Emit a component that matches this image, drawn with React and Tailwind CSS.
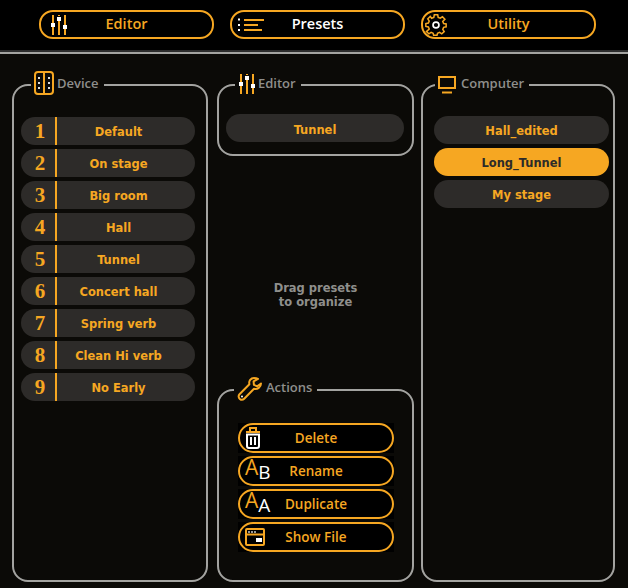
import React from 'react';

const device = ['Default', 'On stage', 'Big room', 'Hall', 'Tunnel', 'Concert hall', 'Spring verb', 'Clean Hi verb', 'No Early'];

function SlidersIcon() {
  return (
    <svg width="18" height="22" viewBox="0 0 18 22" fill="none">
      <path d="M3 1v8M3 13v8M9 1v1M9 6v15M15 1v10M15 15v6" stroke="#f6a722" strokeWidth="2" />
      <rect x="1" y="9" width="4" height="4" fill="#fff" />
      <rect x="7" y="3" width="4" height="4" fill="#fff" />
      <rect x="13" y="11" width="4" height="4" fill="#fff" />
    </svg>
  );
}

function ListIcon() {
  return (
    <svg width="26" height="14" viewBox="0 0 26 14" fill="none">
      <path d="M6 2h20M6 7h14M6 12h18" stroke="#f6a722" strokeWidth="2" />
      <path d="M0 1.500h2M0 7h2M0 12h2" stroke="#fff" strokeWidth="2" />
    </svg>
  );
}

function GearIcon() {
  return (
    <svg width="22" height="24" viewBox="0 0 26 26" fill="none">
      <path
        d="M11 2h4l.6 3 2.400 1 2.600-1.700 2.900 2.900L21 9.800l1 2.400 3 .6v3.400l-3 .6-1 2.400 1.700 2.600-2.900 2.600-2.600-1.700-2.400 1-.6 2.300h-4l-.6-2.300-2.400-1-2.600 1.700-2.900-2.600L5 18.700l-1-2.400-3-.6v-3.400l3-.6 1-2.400-1.700-2.600 2.900-2.900L7.800 6l2.600-1z"
        stroke="#f6a722"
        strokeWidth="1.800"
        transform="translate(0 -1)"
      />
      <circle cx="13" cy="13" r="3.500" stroke="#fff" strokeWidth="2" />
    </svg>
  );
}

function DeviceIcon() {
  return (
    <svg className="-mt-[2px]" width="20" height="24" viewBox="0 0 20 24" fill="none">
      <rect x="1" y="1" width="18" height="22" rx="3" stroke="#f6a722" strokeWidth="2" />
      <path d="M10 2v20" stroke="#f6a722" strokeWidth="2" />
      <path d="M5 6v2M5 11v2M5 16v2M15 6v2M15 11v2M15 16v2" stroke="#ddd" strokeWidth="2" />
    </svg>
  );
}

function MonitorIcon() {
  return (
    <svg className="mt-[2px]" width="18" height="18" viewBox="0 0 18 18" fill="none">
      <rect x="1" y="1" width="16" height="11" stroke="#f6a722" strokeWidth="2" />
      <path d="M4 16.500h10" stroke="#f6a722" strokeWidth="2" />
    </svg>
  );
}

function WrenchIcon() {
  return (
    <svg className="mt-[2px]" width="26" height="26" viewBox="0 0 26 26" fill="none">
      <path
        d="M17 2c-3.200 0-5.500 3-4.600 6.200L2.500 18.200c-1.500 1.600-.8 3.800.3 4.700 1.200 1 3.100 1.100 4.400-.2l9.800-10c3.400 1 7-1.500 7-5.200l-3.800 2.800-3.300-1.500-.3-3.500L21 2.800C19.800 2.200 18.400 2 17 2z"
        stroke="#f6a722"
        strokeWidth="2"
        strokeLinejoin="round"
      />
      <circle cx="5" cy="20.500" r="1" fill="#fff" />
    </svg>
  );
}

function TrashIcon() {
  return (
    <svg width="16" height="22" viewBox="0 0 16 22" fill="none">
      <path d="M1 5h14M5 4V1h6v3" stroke="#f6a722" strokeWidth="2" />
      <path d="M2 7.500h12V19a2 2 0 0 1-2 2H4a2 2 0 0 1-2-2z" stroke="#fff" strokeWidth="2" />
      <path d="M6 10v8M10 10v8" stroke="#fff" strokeWidth="2" />
    </svg>
  );
}

function WindowIcon() {
  return (
    <svg width="20" height="18" viewBox="0 0 20 18" fill="none">
      <rect x="1" y="1" width="18" height="16" rx="1" stroke="#f6a722" strokeWidth="2" />
      <path d="M1 6.500h18" stroke="#f6a722" strokeWidth="2" />
      <path d="M3 4h2M6 4h2M9 4h2" stroke="#ccc" strokeWidth="1.600" />
      <rect x="11" y="10" width="6" height="4" fill="#fff" />
    </svg>
  );
}

function LetterPair({ second }) {
  return (
    <span className="flex items-start leading-none font-['Open_Sans',sans-serif] font-normal h-[24px] w-[26px]">
      <span className="text-[21px] text-[#f6a722] -mt-[2px]">A</span>
      <span className="text-[19px] text-white mt-[4px]">{second}</span>
    </span>
  );
}

function TopButton({ icon, iconLeft, label, active }) {
  return (
    <button className="relative w-[175px] h-[29px] rounded-[14px] border-2 border-[#f6a722] flex items-center justify-center font-['Open_Sans',sans-serif] text-[14.500px] font-semibold">
      <span className={`absolute top-1/2 -translate-y-1/2 flex ${iconLeft}`}>{icon}</span>
      <span className={active ? 'text-white -mt-[2px]' : 'text-[#f6a722] -mt-[2px]'}>{label}</span>
    </button>
  );
}

function Panel({ icon, title, titleTop, titleLeft, gap, className, children }) {
  return (
    <div className={`relative border-2 border-[#a3a3a0] rounded-[16px] ${className}`}>
      <div className={`absolute flex items-center h-[26px] bg-[#0b0a07] pl-[3px] pr-[5px] ${titleTop} ${gap} ${titleLeft}`}>
        {icon}
        <span className="text-[13px] font-['Open_Sans',sans-serif] font-semibold text-[#8f8f8c]">{title}</span>
      </div>
      {children}
    </div>
  );
}

function Pill({ label, selected, className }) {
  return (
    <div className={`h-[28px] rounded-[14px] flex items-center justify-center font-['DejaVu_Sans',sans-serif] font-stretch-condensed font-bold text-[12.750px] ${selected ? 'bg-[#f6a722] text-[#2d2b29]' : 'bg-[#2d2b29] text-[#f6a722]'} ${className}`}>
      {label}
    </div>
  );
}

function ActionButton({ icon, label }) {
  return (
    <div className="bg-black h-[30px]">
      <button className="relative w-full h-full pt-[1px] rounded-[15px] border-2 border-[#f6a722] flex items-center justify-center font-['Open_Sans',sans-serif] font-semibold text-[13.500px] text-[#f6a722]">
        <span className="absolute left-[5px] top-1/2 -translate-y-1/2 flex">{icon}</span>
        {label}
      </button>
    </div>
  );
}

export default function App() {
  return (
    <div className="w-[628px] h-[588px] bg-[#0b0a07] flex flex-col overflow-hidden">
      {/* Top nav */}
      <div className="h-[50px] bg-black flex gap-[16px] pl-[39px] pt-[10px]">
        <TopButton icon={<SlidersIcon />} iconLeft="left-[9px]" label="Editor" />
        <TopButton icon={<ListIcon />} iconLeft="left-[6px]" label="Presets" active />
        <TopButton icon={<GearIcon />} iconLeft="left-[2px]" label="Utility" />
      </div>
      <div className="h-[2px] bg-[#2c2c2c]" />
      <div className="h-[2px] bg-[#a3a3a0]" />

      {/* Columns */}
      <div className="flex pl-[12px] pt-[30px] h-[528px] gap-[9px]">
        <Panel icon={<DeviceIcon />} title="Device" titleTop="-top-[15px]" titleLeft="left-[17px]" gap="gap-[3px]" className="w-[196px] h-[498px] pt-[31px] pl-[7px] pr-[11px]">
          <div className="flex flex-col gap-[4px]">
            {device.map((name, i) => (
              <div key={name} className="h-[28px] rounded-[14px] bg-[#2d2b29] flex items-center text-[#f6a722]">
                <span className="w-[34px] pl-[4px] pt-[1px] text-center font-['Liberation_Serif',serif] font-bold text-[21px] leading-none">{i + 1}</span>
                <span className="w-[2px] h-full bg-[#f6a722]" />
                <span className="flex-1 pr-[15px] pt-[2px] text-center font-['DejaVu_Sans',sans-serif] font-stretch-condensed font-bold text-[12.750px]">{name}</span>
              </div>
            ))}
          </div>
        </Panel>

        <div className="w-[197px] h-[498px] flex flex-col">
          <Panel icon={<SlidersIcon />} title="Editor" titleTop="-top-[15px]" titleLeft="left-[16px]" gap="gap-[2px]" className="h-[72px] pt-[28px] pl-[7px] pr-[8px] shrink-0">
            <Pill label="Tunnel" className="pt-[3px]" />
          </Panel>
          <div className="flex-1 flex items-center justify-center text-center pt-[44px] font-['DejaVu_Sans',sans-serif] font-stretch-condensed font-bold text-[12.750px] leading-[14px] text-[#8f8f8c]">
            Drag presets
            <br />
            to organize
          </div>
          <Panel icon={<WrenchIcon />} title="Actions" titleTop="-top-[16px]" titleLeft="left-[15px]" gap="gap-[3px]" className="h-[193px] pt-[32px] pl-[19px] pr-[18px] shrink-0">
            <div className="flex flex-col gap-[3px]">
              <ActionButton icon={<TrashIcon />} label="Delete" />
              <ActionButton icon={<LetterPair second="B" />} label="Rename" />
              <ActionButton icon={<LetterPair second="A" />} label="Duplicate" />
              <ActionButton icon={<WindowIcon />} label="Show File" />
            </div>
          </Panel>
        </div>

        <Panel icon={<MonitorIcon />} title="Computer" titleTop="-top-[15px]" titleLeft="left-[12px]" gap="gap-[5px]" className="w-[194px] h-[498px] -ml-[2px] pt-[30px] pl-[11px] pr-[4px]">
          <div className="flex flex-col gap-[4px]">
            <Pill label="Hall_edited" className="pt-[2px]" />
            <Pill label="Long_Tunnel" selected className="pt-[2px]" />
            <Pill label="My stage" className="pt-[2px]" />
          </div>
        </Panel>
      </div>
    </div>
  );
}
